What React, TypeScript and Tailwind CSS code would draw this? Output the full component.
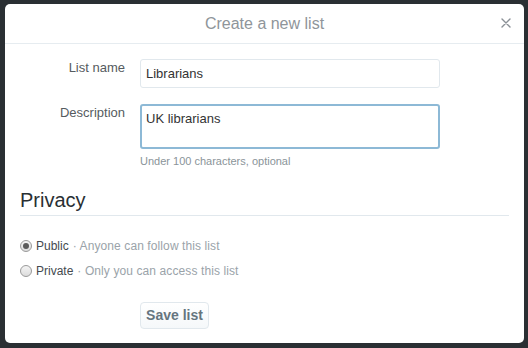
import React from "react";

function Radio({ checked }: { checked: boolean }) {
  return (
    <span className="relative inline-flex h-[12px] w-[12px] shrink-0 items-center justify-center rounded-full border border-[#9a9a9a] bg-gradient-to-b from-[#f4f4f4] to-[#dcdcdc]">
      {checked && <span className="h-[6px] w-[6px] rounded-full bg-[#5a5a5a]" />}
    </span>
  );
}

export default function App() {
  return (
    <div
      className="h-[348px] w-[528px] overflow-hidden bg-[#2a2f33] pl-[5px] pt-[4px]"
      style={{ fontFamily: '"Liberation Sans", Arial, sans-serif' }}
    >
      <div className="flex h-[339px] w-[519px] flex-col rounded-[5px] bg-white">
        <div className="relative flex h-[40px] shrink-0 items-center justify-center border-b border-[#e6ecf0]">
          <span className="text-[16px] leading-[20px] text-[#8f959a]">Create a new list</span>
          <button className="absolute right-[13px] top-[14px] flex h-[10px] w-[10px] items-center justify-center">
            <svg width="10" height="10" viewBox="0 0 10 10">
              <path d="M1 1 L9 9 M9 1 L1 9" stroke="#8a9096" strokeWidth="1.4" strokeLinecap="round" />
            </svg>
          </button>
        </div>

        <div className="flex flex-col pt-[15px]">
          <div className="flex">
            <label className="w-[120px] text-right text-[13px] leading-[18px] text-[#555b60]">List name</label>
            <div className="ml-[15px] flex h-[29px] w-[300px] items-center rounded-[3px] border border-[#e1e8ed] px-[5px] text-[13px] text-[#333]">
              Librarians
            </div>
          </div>

          <div className="mt-[16px] flex">
            <label className="w-[120px] text-right text-[13px] leading-[18px] text-[#555b60]">Description</label>
            <div className="ml-[15px] flex flex-col">
              <div className="h-[45px] w-[300px] rounded-[3px] border-2 border-[#8db9d6] px-[4px] pt-[4px] text-[13px] leading-[18px] text-[#333]">
                UK librarians
              </div>
              <div className="mt-[5px] text-[11px] leading-[14px] text-[#8a9499]">Under 100 characters, optional</div>
            </div>
          </div>

          <div className="mx-[15px] mt-[20px] border-b border-[#e1e8ed] pb-[3px] text-[20px] leading-[24px] text-[#292f33]">
            Privacy
          </div>

          <div className="ml-[15px] mt-[21px] flex items-center gap-[4px] text-[12px] leading-[18px]">
            <Radio checked />
            <span className="text-[#444a4f]">Public</span>
            <span className="tracking-[0.1px] text-[#9aa3a9]">· Anyone can follow this list</span>
          </div>
          <div className="ml-[15px] mt-[7px] flex items-center gap-[4px] text-[12px] leading-[18px]">
            <Radio checked={false} />
            <span className="text-[#444a4f]">Private</span>
            <span className="tracking-[0.1px] text-[#9aa3a9]">· Only you can access this list</span>
          </div>

          <div className="ml-[135px] mt-[22px]">
            <button className="flex h-[27px] w-[69px] items-center justify-center rounded-[4px] border border-[#e1e8ed] bg-gradient-to-b from-white to-[#f5f8fa] text-[14px] font-bold text-[#66757f]">
              Save list
            </button>
          </div>
        </div>
      </div>
    </div>
  );
}
